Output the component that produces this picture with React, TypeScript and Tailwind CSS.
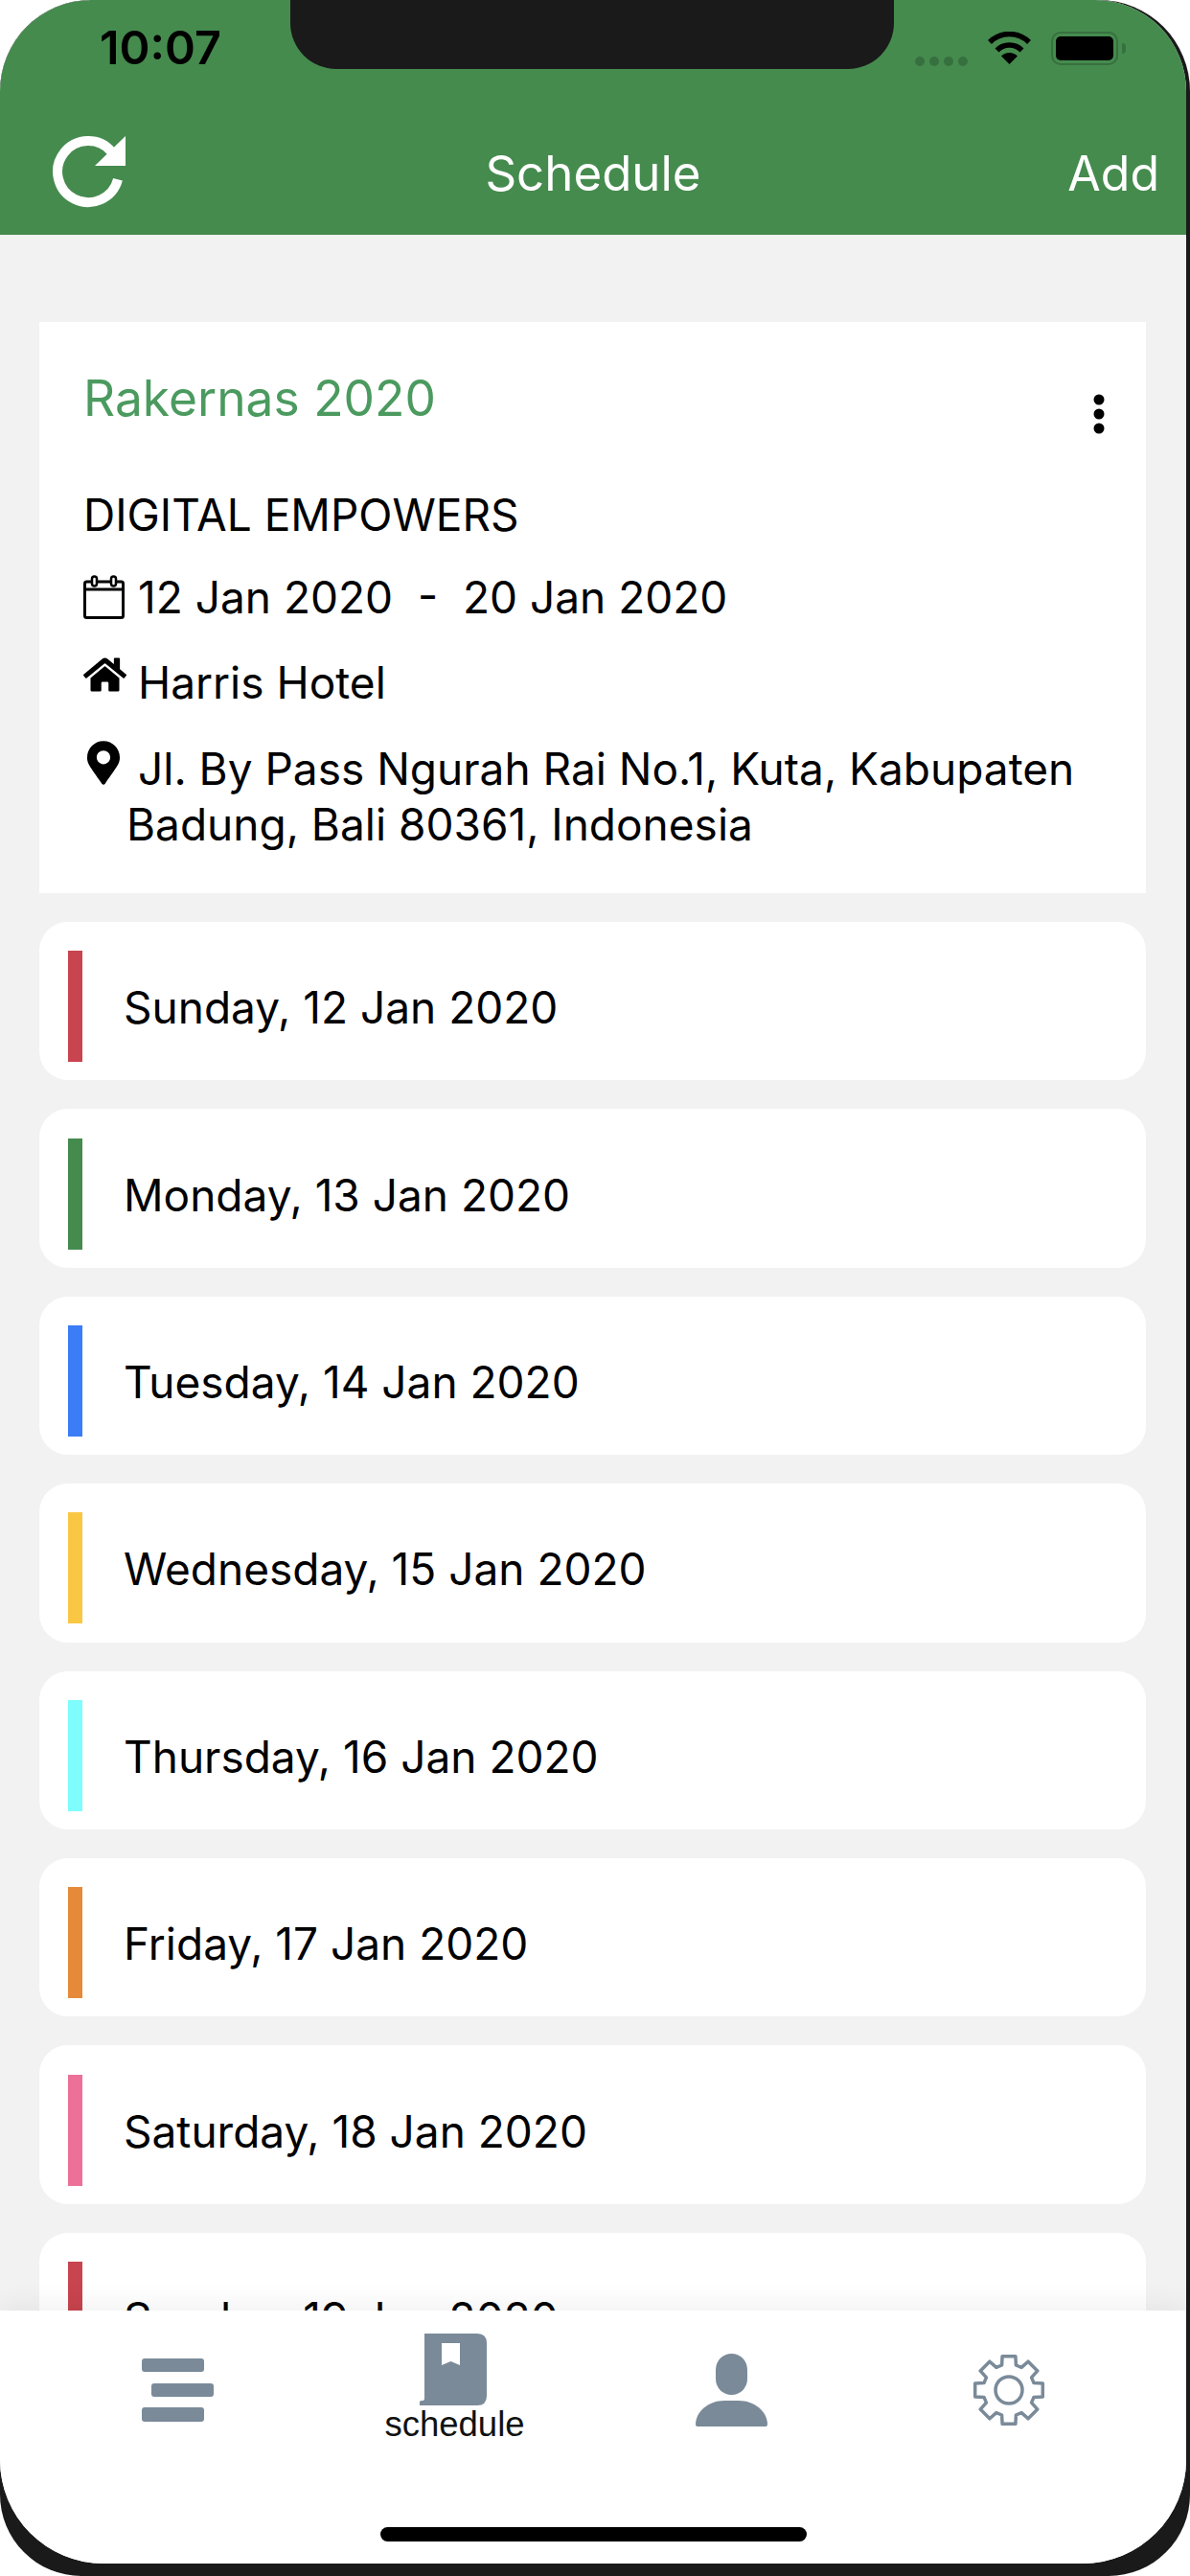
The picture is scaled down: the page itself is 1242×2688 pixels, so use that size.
import React from 'react';
import { FaHome, FaMapMarkerAlt } from 'react-icons/fa';

const days = [
  { label: 'Sunday, 12 Jan 2020', bar: 'bg-[#c8444e]' },
  { label: 'Monday, 13 Jan 2020', bar: 'bg-[#458b4e]' },
  { label: 'Tuesday, 14 Jan 2020', bar: 'bg-[#3b7df6]' },
  { label: 'Wednesday, 15 Jan 2020', bar: 'bg-[#f9c744]' },
  { label: 'Thursday, 16 Jan 2020', bar: 'bg-[#7ffcfd]' },
  { label: 'Friday, 17 Jan 2020', bar: 'bg-[#e68a3a]' },
  { label: 'Saturday, 18 Jan 2020', bar: 'bg-[#ec7097]' },
  { label: 'Sunday, 19 Jan 2020', bar: 'bg-[#c8444e]' },
];

const gearPath = () => {
  const c = 38;
  const pts: string[] = [];
  for (let i = 0; i < 8; i++) {
    const a = (i * 45 - 90) * (Math.PI / 180);
    const near = (11 * Math.PI) / 180;
    const far = (16 * Math.PI) / 180;
    [
      [a - far, 27],
      [a - near, 36],
      [a + near, 36],
      [a + far, 27],
    ].forEach(([ang, r]) => {
      pts.push(`${(c + r * Math.cos(ang)).toFixed(1)} ${(c + r * Math.sin(ang)).toFixed(1)}`);
    });
  }
  return `M${pts.join('L')}Z`;
};

const StatusBar = () => (
  <div className="flex h-[100px] items-center justify-between pl-[104px] pr-[63px]">
    <span className="text-[48.5px] font-semibold leading-none text-black">10:07</span>
    <div className="flex items-center">
      <div className="mt-[27px] flex gap-[5px]">
        {[0, 1, 2, 3].map((i) => (
          <span key={i} className="h-[10px] w-[10px] rounded-full bg-[#37703f]" />
        ))}
      </div>
      <svg width="47" height="35" viewBox="0 0 47 35" className="ml-[20px]">
        <path d="M3 11A29 29 0 0 1 44 11" fill="none" stroke="#000" strokeWidth="5.5" />
        <path d="M10.5 19.5A18 18 0 0 1 36.5 19.5" fill="none" stroke="#000" strokeWidth="5.5" />
        <path d="M23.5 34L15 25.5A12 12 0 0 1 32 25.5Z" fill="#000" />
      </svg>
      <div className="ml-[20px] flex h-[35px] w-[70px] items-center justify-center rounded-[10px] border-[2px] border-[#37703f]">
        <div className="h-[25px] w-[60px] rounded-[5px] bg-black" />
      </div>
      <div className="ml-[4px] h-[11px] w-[4px] rounded-r-full bg-[#37703f]" />
    </div>
  </div>
);

const NavBar = () => (
  <div className="grid h-[145px] grid-cols-[1fr_auto_1fr] items-center px-[28px] pt-[16px] text-white">
    <svg width="80" height="80" viewBox="0 0 80 80" className="ml-[26px]">
      <path d="M69 46.3A32 32 0 1 1 62.5 17.4" fill="none" stroke="#fff" strokeWidth="10" />
      <path d="M77 1V32H45Z" fill="#fff" />
    </svg>
    <span className="text-[51px] leading-none">Schedule</span>
    <span className="justify-self-end text-[50px] leading-none">Add</span>
  </div>
);

const EventCard = () => (
  <div className="bg-white pb-[43px] pl-[46px] pr-[40px] pt-[39px] text-[46px] text-black">
    <div className="flex items-start justify-between">
      <h1 className="text-[51.5px] leading-[80px] text-[#4b9a5f]">Rakernas 2020</h1>
      <svg width="12" height="42" viewBox="0 0 12 42" className="mr-[3px] mt-[36px]">
        <circle cx="6" cy="6" r="5.5" />
        <circle cx="6" cy="21" r="5.5" />
        <circle cx="6" cy="36" r="5.5" />
      </svg>
    </div>
    <p className="mt-[52px] leading-[60px]">DIGITAL EMPOWERS</p>
    <div className="mt-[26px] flex h-[60px] items-center">
      <svg width="43" height="46" viewBox="0 0 43 46" className="shrink-0">
        <rect x="1.5" y="7" width="40" height="37.5" rx="2" fill="none" stroke="#000" strokeWidth="3" />
        <path d="M1.5 15H41.5" stroke="#000" strokeWidth="3" />
        <rect x="9" y="1.5" width="5" height="10" rx="2.5" fill="#fff" stroke="#000" strokeWidth="2.5" />
        <rect x="29" y="1.5" width="5" height="10" rx="2.5" fill="#fff" stroke="#000" strokeWidth="2.5" />
      </svg>
      <span className="ml-[14px] whitespace-pre">12 Jan 2020  -  20 Jan 2020</span>
    </div>
    <div className="mt-[28px] flex h-[60px] items-center">
      <FaHome className="h-[40px] w-[45px] shrink-0 -translate-y-[7px]" />
      <span className="ml-[12px] translate-y-[1px]">Harris Hotel</span>
    </div>
    <div className="mt-[32px] flex items-start">
      <FaMapMarkerAlt className="ml-[4px] h-[46px] w-[34px] shrink-0" />
      <p className="ml-[7px] indent-[12px] leading-[58px]">
        Jl. By Pass Ngurah Rai No.1, Kuta, Kabupaten
        <br />
        Badung, Bali 80361, Indonesia
      </p>
    </div>
  </div>
);

const DayRow = ({ label, bar }: { label: string; bar: string }) => (
  <div className="flex h-[165.4px] shrink-0 items-center rounded-[30px] bg-white pb-[19px] pl-[30px] pt-[30px]">
    <div className={`h-[116px] w-[15px] ${bar}`} />
    <span className="ml-[43px] mt-[2px] text-[46px] leading-none text-black">{label}</span>
  </div>
);

const TabBar = () => (
  <div className="relative flex h-[264px] shrink-0 items-start justify-between bg-white px-[113px] shadow-[0_-8px_24px_rgba(0,0,0,0.05)]">
    <div className="flex w-[145px] justify-center pt-[50px]">
      <svg width="75" height="66" viewBox="0 0 75 66" fill="#7a8a99">
        <rect x="0" y="0" width="65" height="14" rx="3" />
        <rect x="10" y="26" width="65" height="14" rx="3" />
        <rect x="0" y="51" width="65" height="15" rx="3" />
      </svg>
    </div>
    <div className="flex w-[145px] flex-col items-center pt-[24px]">
      <svg width="70" height="75" viewBox="0 0 70 75" className="-translate-x-[2px]">
        <path d="M5 0H60Q70 0 70 10V65Q70 75 60 75H0V71Q0 70 3 70Q5 70 5 68Z" fill="#7a8a99" />
        <path d="M23 10H42V33L32.5 29L23 33Z" fill="#fff" />
      </svg>
      <span className="whitespace-nowrap font-['Liberation_Sans'] text-[36.5px] leading-[40px] text-[#111]">schedule</span>
    </div>
    <div className="flex w-[145px] justify-center pt-[45px]">
      <svg width="75" height="76" viewBox="0 0 75 76" fill="#7a8a99">
        <rect x="21" y="0" width="33" height="43" rx="16.5" />
        <path d="M0 74C0 60 14 49 30 49H45C61 49 75 60 75 74Q75 76 73 76H2Q0 76 0 74Z" />
      </svg>
    </div>
    <div className="flex w-[145px] justify-center pt-[45px]">
      <svg width="76" height="76" viewBox="0 0 76 76" fill="none" stroke="#7a8a99" strokeWidth="3.5" strokeLinejoin="round">
        <path d={gearPath()} />
        <circle cx="38" cy="38" r="14" />
      </svg>
    </div>
    <div className="absolute left-[397px] top-[226px] h-[15px] w-[445px] rounded-full bg-black" />
  </div>
);

export default function App() {
  return (
    <div className="h-[2688px] w-[1242px] bg-white font-['Inter',sans-serif]">
      <div className="relative h-full overflow-hidden rounded-b-[85px] rounded-t-[95px] bg-[#1a1a1a]">
        <div className="flex h-[2675px] w-[1238px] flex-col overflow-hidden rounded-b-[108px] rounded-t-[95px] bg-[#f2f2f2]">
          <header className="h-[245px] shrink-0 bg-[#458b4e]">
            <StatusBar />
            <NavBar />
          </header>
          <main className="flex min-h-0 flex-1 flex-col gap-[30px] overflow-hidden pl-[41px] pr-[42px] pt-[91px]">
            <EventCard />
            {days.map((d) => (
              <DayRow key={d.label} label={d.label} bar={d.bar} />
            ))}
          </main>
          <TabBar />
        </div>
        <div className="absolute left-[303px] top-0 h-[72px] w-[630px] rounded-b-[48px] bg-[#1a1a1a]" />
      </div>
    </div>
  );
}
